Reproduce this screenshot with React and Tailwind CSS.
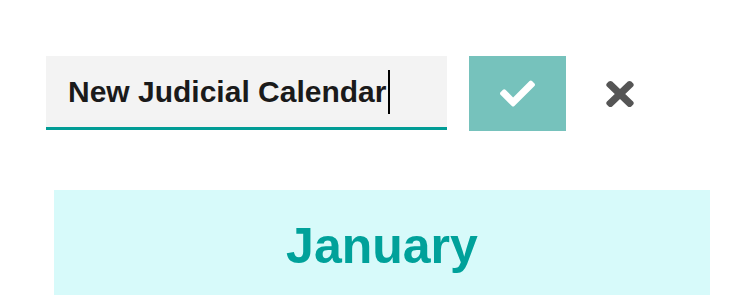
import React from 'react';
import { FaCheck, FaTimes } from 'react-icons/fa';

const App = () => {
  return (
    <div className="w-[730px] h-[295px] bg-white overflow-hidden pt-[56px] pl-[46px]" style={{ fontFamily: '"Liberation Sans", Arial, sans-serif' }}>
      <div className="flex items-start">
        <div className="w-[401px] h-[74px] bg-[#f3f3f3] border-b-[3px] border-[#009c95] flex items-center pl-[22px]">
          <span className="text-[30px] leading-none font-bold text-[#1a1a1a]">New Judicial Calendar</span>
          <span className="w-[2px] h-[44px] bg-black ml-[2px]"></span>
        </div>
        <button className="ml-[22px] w-[97px] h-[75px] bg-[#76c2bc] flex items-center justify-center">
          <FaCheck size={35} className="text-white" />
        </button>
        <button className="ml-[40px] h-[75px] flex items-center text-[#555555]">
          <FaTimes size={28} className="scale-y-[0.95]" style={{ width: 28, height: 40 }} />
        </button>
      </div>
      <div className="ml-[8px] mt-[59px] w-[656px] bg-[#d7fafa] pt-[31px] pb-[40px] flex justify-center">
        <h2 className="text-[50px] leading-none font-bold text-[#00a19a]">January</h2>
      </div>
    </div>
  );
};

export default App;
